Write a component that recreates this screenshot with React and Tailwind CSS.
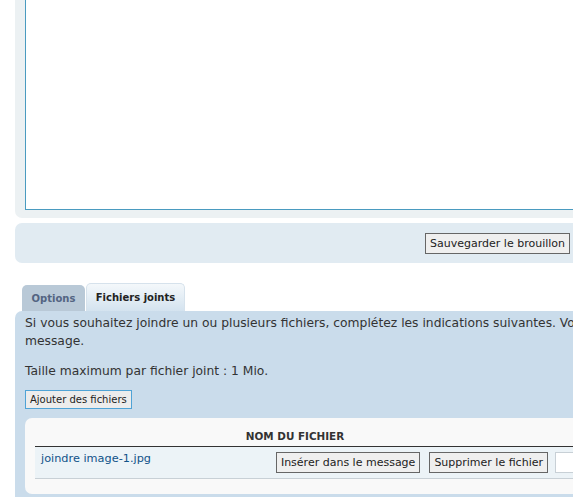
const font = "font-['Verdana','DejaVu_Sans',sans-serif]";

const GreyButton = ({ children, className = "" }) => (
    <button
        className={`h-[21px] px-[4px] border border-[#666] bg-[#efefef] text-[11px] leading-none text-[#222] ${className}`}
    >
        {children}
    </button>
);

export default function App() {
    return (
        <div
            className={`w-[573px] h-[497px] overflow-hidden bg-white pl-[15px] ${font}`}
        >
            <div className="w-[620px]">
                {/* editor */}
                <div className="bg-[#ecf1f3] rounded-b-[7px] pl-[10px] pb-[8px]">
                    <div className="h-[210px] bg-white border-l border-b border-[#4a9bc0]" />
                </div>

                {/* draft bar */}
                <div className="mt-[5px] w-[564px] h-[40px] bg-[#e1ebf2] rounded-[7px] flex items-center justify-end pr-[9px]">
                    <GreyButton className="h-[20px] px-[3px]">Sauvegarder le brouillon</GreyButton>
                </div>

                {/* tabs */}
                <div className="mt-[20px] ml-[7px] flex items-end gap-[1px] h-[28px]">
                    <div className="h-[26px] w-[63px] rounded-t-[5px] bg-[#b9c9d7] flex items-center justify-center text-[10px] font-bold text-[#536482]">
                        Options
                    </div>
                    <div className="h-[28px] w-[99px] rounded-t-[5px] border border-b-0 border-[#d6e2ec] bg-gradient-to-b from-[#f4f8fb] to-[#d4e3ef] flex items-center justify-center text-[10px] font-bold text-[#222]">
                        Fichiers joints
                    </div>
                </div>

                {/* attachments panel */}
                <div className="bg-[#cadceb] rounded-tl-[7px] px-[10px] pt-[3px] pb-[10px] text-[12.3px] text-[#333]">
                    <p className="leading-[18px] whitespace-nowrap">
                        Si vous souhaitez joindre un ou plusieurs fichiers, complétez les indications suivantes. Vous pouvez aussi les glisser dans le
                        <br />
                        message.
                    </p>
                    <p className="mt-[12px] leading-[18px]">Taille maximum par fichier joint : 1 Mio.</p>
                    <button className="mt-[10px] h-[19px] px-[4px] border border-[#4fa3d6] bg-[#ececec] text-[10px] leading-none text-[#222]">
                        Ajouter des fichiers
                    </button>

                    <div className="mt-[9px] bg-[#f9f9f9] rounded-[7px] px-[10px] pt-[12px] pb-[15px]">
                        <div className="flex">
                            <div className="w-[520px] text-center text-[10.4px] leading-[12px] font-bold uppercase text-[#333] pb-[4px] border-b border-[#333]">
                                Nom du fichier
                            </div>
                            <div className="flex-1 border-b border-[#333]" />
                        </div>
                        <div className="flex h-[32px] bg-[#ecf3f7] border-b border-[#c8d0d6]">
                            <div className="w-[520px] flex items-center justify-between pl-[6px] pr-[5px]">
                                <span className="text-[11.3px] text-[#105289] -mt-[6px]">joindre image-1.jpg</span>
                                <div className="flex gap-[9px]">
                                    <GreyButton>Insérer dans le message</GreyButton>
                                    <GreyButton>Supprimer le fichier</GreyButton>
                                </div>
                            </div>
                            <div className="flex items-center pl-[2px]">
                                <div className="w-[60px] h-[21px] bg-white border border-[#c8d0d6]" />
                            </div>
                        </div>
                    </div>
                </div>
            </div>
        </div>
    );
}
